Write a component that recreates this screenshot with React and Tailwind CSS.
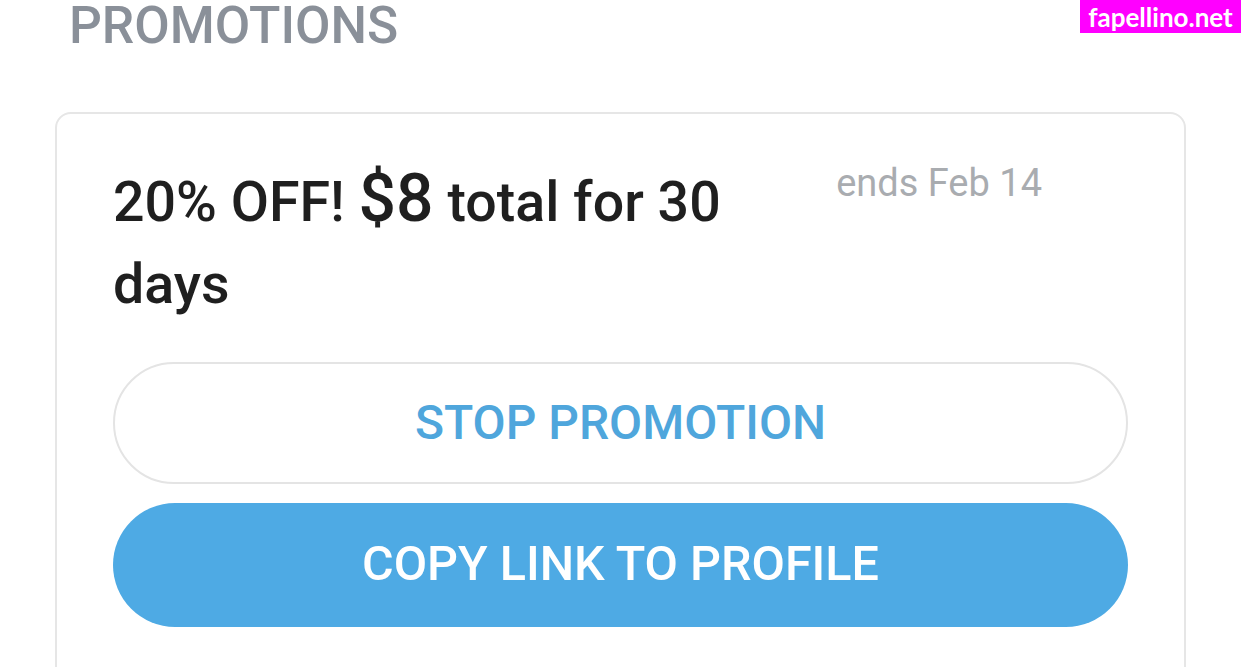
export default function App() {
  return (
    <div className="relative min-h-[667px] bg-white font-['Roboto',sans-serif] overflow-hidden">
      <div className="absolute top-0 right-0 w-[161px] h-[33px] bg-[#ff00ff] flex items-center justify-center">
        <span className="font-['Lato',sans-serif] font-bold text-white text-[26px] leading-none">
          fapellino.net
        </span>
      </div>

      <div className="pl-[69px] pt-[1px]">
        <h1 className="text-[51.5px] leading-none font-medium text-[#8a9099] mt-[-1px]">PROMOTIONS</h1>
      </div>

      <div className="mx-[55px] mt-[60px] border-2 border-[#e6e6e6] rounded-[16px] px-[56px] pt-[48px] pb-[60px]">
        <div className="flex items-start justify-between">
          <h2 className="w-[660px] text-[55.5px] leading-[82px] font-medium text-[#1f1f1f]">
            20% OFF! <span className="text-[66px] leading-none">$8</span> total for 30 days
          </h2>
          <span className="mr-[86px] mt-[-9px] text-[38px] leading-[60px] text-[#a9acb0]">ends Feb 14</span>
        </div>

        <div className="mt-[36px] flex flex-col gap-[19px]">
          <button className="h-[122px] w-full rounded-full border-2 border-[#e4e4e4] bg-white text-[#4fa6dc] text-[48px] font-medium">
            STOP PROMOTION
          </button>
          <button className="h-[124px] w-full rounded-full bg-[#4eaae4] text-white text-[48.5px] font-medium">
            COPY LINK TO PROFILE
          </button>
        </div>
      </div>
    </div>
  );
}
